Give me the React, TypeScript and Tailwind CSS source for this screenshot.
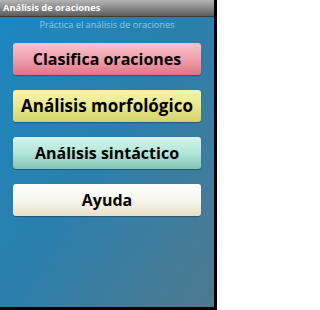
import React from "react";

const buttons = [
  { label: "Clasifica oraciones", cls: "bg-gradient-to-b from-[#f9c3cc] via-[#f0a0ae] to-[#e07585] text-[16px]" },
  { label: "Análisis morfológico", cls: "bg-gradient-to-b from-[#f4f4b0] via-[#e8e88c] to-[#d2d26a] text-[17px]" },
  { label: "Análisis sintáctico", cls: "bg-gradient-to-b from-[#d4f4ec] via-[#b2e6da] to-[#7ec4b4] text-[16px]" },
  { label: "Ayuda", cls: "bg-gradient-to-b from-[#ffffff] via-[#f8f6ee] to-[#e8e0c8] text-[16px]" },
];

export default function App() {
  return (
    <div className="w-[217px] h-[310px] bg-black" style={{ fontFamily: '"Open Sans", "Noto Sans", sans-serif' }}>
      <div className="w-[214px] h-[307px] flex flex-col bg-gradient-to-br from-[#1a88c2] via-[#2a7fac] to-[#4d7a8e]">
        <div className="h-[17px] shrink-0 bg-gradient-to-b from-[#b4b4b4] via-[#8a8a8a] to-[#5c5c5c] border-b border-[#3a3a3a] flex items-center pl-[3px]">
          <span className="text-white font-bold text-[9.3px] leading-none">Análisis de oraciones</span>
        </div>
        <div className="text-center text-[#92c8e6] text-[9.2px] leading-none mt-[3px]">Práctica el análisis de oraciones</div>
        <div className="flex flex-col gap-[15px] mt-[14px] px-[13px]">
          {buttons.map((b) => (
            <div
              key={b.label}
              className={`h-[32px] rounded-[3px] flex items-center justify-center font-bold text-black shadow-[0_1px_1px_rgba(0,0,0,0.3)] ${b.cls}`}
            >
              {b.label}
            </div>
          ))}
        </div>
      </div>
    </div>
  );
}
